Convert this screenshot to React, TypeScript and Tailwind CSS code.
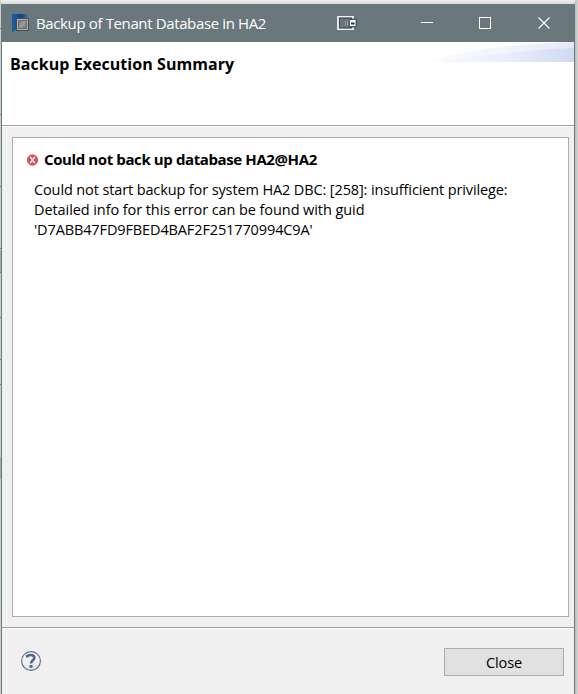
import React from "react";

const edgeMarks = [28, 114, 186, 248, 272, 317, 359, 384];

function AppIcon() {
  return (
    <svg width="18" height="18" viewBox="0 0 18 18">
      <defs>
        <linearGradient id="blue" x1="0" y1="0" x2="1" y2="0">
          <stop offset="0" stopColor="#1f5f9f" />
          <stop offset="0.55" stopColor="#124380" />
          <stop offset="1" stopColor="#5c86a8" />
        </linearGradient>
        <linearGradient id="metal" x1="0" y1="0" x2="1" y2="1">
          <stop offset="0" stopColor="#76787a" />
          <stop offset="0.5" stopColor="#999b9d" />
          <stop offset="1" stopColor="#717375" />
        </linearGradient>
      </defs>
      <path d="M0 0h18l-3 5H5v9l-4 4H0z" fill="url(#blue)" />
      <rect x="4" y="4" width="13" height="13" fill="#4b4d4f" />
      <rect x="5" y="5" width="11" height="11" fill="#a9abad" />
      <rect x="6" y="6" width="9" height="9" fill="#6a6c6e" />
      <rect x="7" y="7" width="7" height="7" fill="url(#metal)" />
    </svg>
  );
}

function DockIcon() {
  return (
    <svg width="21" height="14" viewBox="0 0 21 14">
      <rect x="1" y="0.5" width="15" height="13" fill="#5b696c" stroke="#f1f1f4" strokeWidth="1.8" />
      <rect x="2.4" y="2.2" width="12.2" height="9.6" fill="#65767a" stroke="#3e4354" strokeWidth="0.8" />
      <path d="M8.5 4.5v5M10.5 4.5v5" stroke="#96a0a5" />
      <rect x="12" y="2.5" width="8.5" height="9" rx="2.5" fill="#51586a" />
      <rect x="13" y="4" width="5.5" height="6" fill="#fff" />
      <rect x="14" y="6.5" width="3.5" height="2" fill="#222b43" />
    </svg>
  );
}

function TitleBar() {
  return (
    <div className="flex h-[38px] shrink-0 items-center bg-[#6a787c] pl-[10px] text-white">
      <AppIcon />
      <span className="ml-[6px] w-[300px] whitespace-nowrap text-[15px] leading-5 tracking-[-0.37px]">
        Backup of Tenant Database in HA2
      </span>
      <div className="ml-[1px] flex h-full items-center">
        <DockIcon />
        <svg className="ml-[63px]" width="134" height="14" viewBox="0 0 134 14" fill="none" stroke="#fff">
          <path d="M0 6.5h12" />
          <rect x="58.5" y="1.5" width="11" height="11" />
          <path d="M117.5 1.5l11 11M128.5 1.5l-11 11" strokeWidth="1.1" />
        </svg>
      </div>
    </div>
  );
}

function Header() {
  return (
    <div className="flex h-[84px] shrink-0 justify-between border-b border-[#a0a0a0] bg-white pl-[8px]">
      <h1 className="mt-[12px] whitespace-nowrap text-[16px] leading-5 font-bold tracking-[0.05px] text-black">
        Backup Execution Summary
      </h1>
      <svg width="142" height="20" viewBox="0 0 142 20">
        <defs>
          <linearGradient id="swoosh">
            <stop offset="0" stopColor="#f8f9fe" />
            <stop offset="0.5" stopColor="#ebeffb" />
            <stop offset="1" stopColor="#d0daf4" />
          </linearGradient>
        </defs>
        <path d="M1 20C22 9 80 2 142 0v20z" fill="url(#swoosh)" />
        <path d="M1 20C22 9 80 2 142 0v6C91 8 43 14 8 20z" fill="#fff" opacity="0.4" />
      </svg>
    </div>
  );
}

function ErrorIcon() {
  return (
    <svg className="mt-[2px]" width="12" height="12" viewBox="0 0 12 12">
      <circle cx="5.5" cy="6" r="5.2" fill="#e34b5b" stroke="#d0475a" strokeWidth="0.8" />
      <path d="M3.2 2.8l4.6 6.4M7.8 2.8l-4.6 6.4" stroke="#fff" strokeWidth="1.4" />
    </svg>
  );
}

function HelpIcon() {
  return (
    <svg width="20" height="20" viewBox="0 0 20 20" fill="none">
      <defs>
        <linearGradient id="help" x2="0" y2="1">
          <stop stopColor="#fff" />
          <stop offset="1" stopColor="#e2e4e7" />
        </linearGradient>
      </defs>
      <circle cx="10" cy="10" r="9.4" fill="url(#help)" stroke="#596a8b" strokeWidth="1.1" />
      <path d="M6.2 6.5V5Q8 4 10 4c2.3 0 3.4 1 3.4 2.8 0 2.5-3.4 2.6-3.4 5.7" stroke="#526489" strokeWidth="2.6" />
      <rect x="8.4" y="14" width="3.2" height="2.8" rx="0.9" fill="#526489" />
    </svg>
  );
}

export default function App() {
  return (
    <main className="flex h-[694px] w-[578px] overflow-hidden bg-[#d2d5d6] font-['Open_Sans','Noto_Sans',sans-serif] text-black">
      <div className="relative w-px shrink-0 bg-[#c8cfd0]">
        {edgeMarks.map((y) => (
          <div key={y} className="absolute left-0 h-px w-px bg-[#778184]" style={{ top: y }} />
        ))}
        <div className="absolute top-[250px] h-[22px] w-px bg-[#a5adae]" />
        <div className="absolute top-[457px] h-[22px] w-px bg-[#a5adae]" />
      </div>
      <div className="flex w-[574px] shrink-0 flex-col">
        <div className="h-1 shrink-0 bg-gradient-to-b from-[#eeeeee] to-[#d9dbdc]" />
        <section className="flex h-[690px] flex-col border-x border-[#6a787c] bg-[#f0f0f0]">
          <TitleBar />
          <Header />
          <div className="flex h-[502px] shrink-0 flex-col border-t border-b border-t-white border-b-[#a0a0a0] pt-[10px] pl-[10px]">
            <div className="h-[480px] w-[557px] border border-[#abadb3] bg-white pl-[14px]">
              <div className="mt-[11px] flex items-center">
                <ErrorIcon />
                <h2 className="ml-[5px] whitespace-nowrap text-[15px] leading-5 font-bold tracking-[-0.39px]">
                  Could not back up database HA2@HA2
                </h2>
              </div>
              <div className="mt-[11px] pl-[7px] text-[14.5px] leading-5 whitespace-nowrap">
                <p className="tracking-[-0.12px]">Could not start backup for system HA2 DBC: [258]: insufficient privilege:</p>
                <p className="tracking-[-0.08px]">Detailed info for this error can be found with guid</p>
                <p className="tracking-[-0.12px]">&apos;D7ABB47FD9FBED4BAF2F251770994C9A&apos;</p>
              </div>
            </div>
          </div>
          <footer className="flex h-[66px] items-start justify-between border-t border-white pr-[10px] pl-[19px]">
            <button className="mt-[22px]" aria-label="Help"><HelpIcon /></button>
            <button className="mt-[19px] h-[28px] w-[120px] border border-[#adadad] bg-[#e1e1e1] pt-[2px] text-[14.5px] leading-5 tracking-[-0.1px]">
              Close
            </button>
          </footer>
        </section>
      </div>
      <div className="w-[3px] shrink-0 bg-gradient-to-r from-[#b8bdbe] to-[#d8d8d8]" />
    </main>
  );
}
